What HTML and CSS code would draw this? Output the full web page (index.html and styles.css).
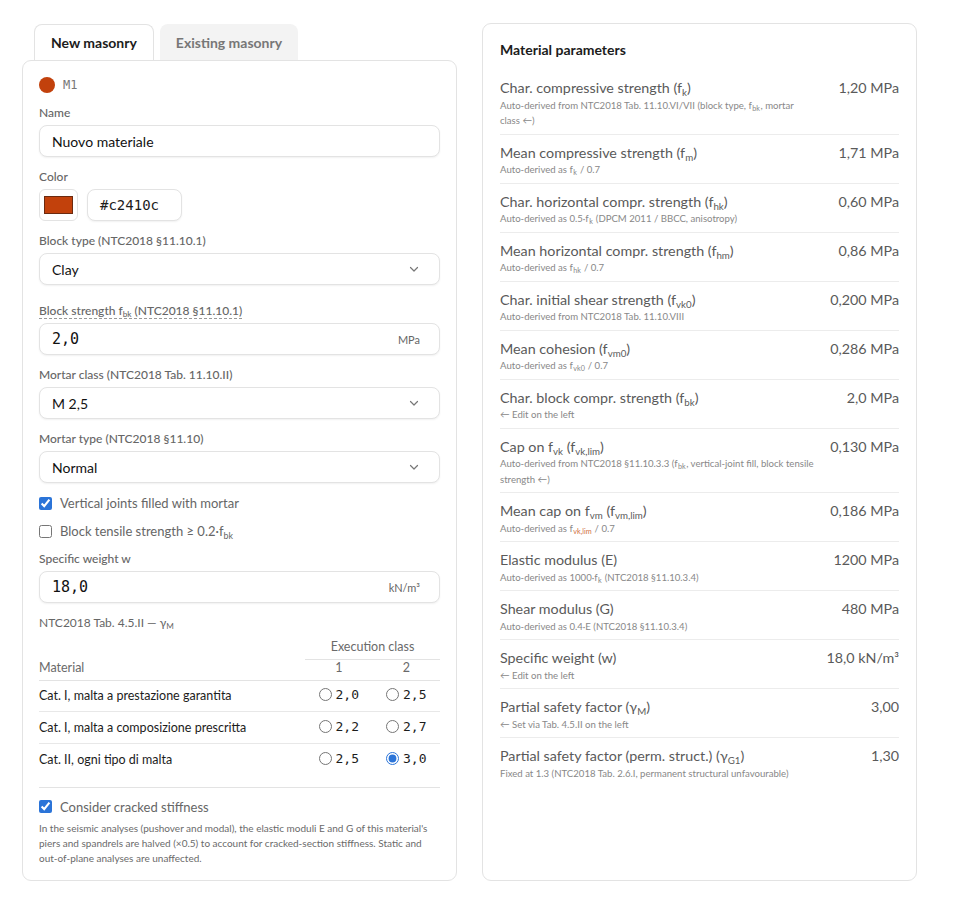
FILE: index.html
```html
<!DOCTYPE html>
<html lang="en">
<head>
    <meta charset="UTF-8">
    <meta name="viewport" content="width=device-width, initial-scale=1.0">
    <title>Masonry material</title>
    <link rel="stylesheet" href="styles.css">
</head>
<body>
    <div class="layout">
        <!-- Left: material editor -->
        <div class="editor">
            <div class="tabs">
                <div class="tab active">New masonry</div>
                <div class="tab">Existing masonry</div>
            </div>
            <div class="card form-card">
                <div class="material-id">
                    <span class="dot"></span>
                    <span class="mono id-text">M1</span>
                </div>

                <div class="field">
                    <label class="field-label">Name</label>
                    <div class="box"><span class="box-text">Nuovo materiale</span></div>
                </div>

                <div class="field">
                    <label class="field-label">Color</label>
                    <div class="color-row">
                        <div class="swatch-box"><span class="swatch"></span></div>
                        <div class="box hex-box"><span class="mono hex">#c2410c</span></div>
                    </div>
                </div>

                <div class="field">
                    <label class="field-label">Block type (NTC2018 §11.10.1)</label>
                    <div class="box select">
                        <span class="box-text">Clay</span>
                        <svg class="chevron" width="12" height="12" viewBox="0 0 12 12"><path d="M2.5 4.5 L6 8 L9.5 4.5" fill="none" stroke="#777" stroke-width="1.2" stroke-linecap="round" stroke-linejoin="round"/></svg>
                    </div>
                </div>

                <div class="field field-spaced">
                    <label class="field-label"><span class="dashed">Block strength f<sub>bk</sub> (NTC2018 §11.10.1)</span></label>
                    <div class="box">
                        <span class="mono num">2,0</span>
                        <span class="unit">MPa</span>
                    </div>
                </div>

                <div class="field">
                    <label class="field-label">Mortar class (NTC2018 Tab. 11.10.II)</label>
                    <div class="box select">
                        <span class="box-text">M 2,5</span>
                        <svg class="chevron" width="12" height="12" viewBox="0 0 12 12"><path d="M2.5 4.5 L6 8 L9.5 4.5" fill="none" stroke="#777" stroke-width="1.2" stroke-linecap="round" stroke-linejoin="round"/></svg>
                    </div>
                </div>

                <div class="field">
                    <label class="field-label">Mortar type (NTC2018 §11.10)</label>
                    <div class="box select">
                        <span class="box-text">Normal</span>
                        <svg class="chevron" width="12" height="12" viewBox="0 0 12 12"><path d="M2.5 4.5 L6 8 L9.5 4.5" fill="none" stroke="#777" stroke-width="1.2" stroke-linecap="round" stroke-linejoin="round"/></svg>
                    </div>
                </div>

                <label class="check"><input type="checkbox" checked><span>Vertical joints filled with mortar</span></label>
                <label class="check"><input type="checkbox"><span>Block tensile strength ≥ 0.2·f<sub>bk</sub></span></label>

                <div class="field">
                    <label class="field-label">Specific weight w</label>
                    <div class="box">
                        <span class="mono num">18,0</span>
                        <span class="unit">kN/m³</span>
                    </div>
                </div>

                <div class="table-title">NTC2018 Tab. 4.5.II — γ<sub>M</sub></div>
                <table class="gamma-table">
                    <thead>
                        <tr>
                            <th></th>
                            <th colspan="2" class="exec">Execution class</th>
                        </tr>
                        <tr class="sub-head">
                            <th class="mat">Material</th>
                            <th>1</th>
                            <th>2</th>
                        </tr>
                    </thead>
                    <tbody>
                        <tr>
                            <td>Cat. I, malta a prestazione garantita</td>
                            <td><label class="radio"><input type="radio" name="g"><span class="mono">2,0</span></label></td>
                            <td><label class="radio"><input type="radio" name="g"><span class="mono">2,5</span></label></td>
                        </tr>
                        <tr>
                            <td>Cat. I, malta a composizione prescritta</td>
                            <td><label class="radio"><input type="radio" name="g"><span class="mono">2,2</span></label></td>
                            <td><label class="radio"><input type="radio" name="g"><span class="mono">2,7</span></label></td>
                        </tr>
                        <tr>
                            <td>Cat. II, ogni tipo di malta</td>
                            <td><label class="radio"><input type="radio" name="g"><span class="mono">2,5</span></label></td>
                            <td><label class="radio"><input type="radio" name="g" checked><span class="mono">3,0</span></label></td>
                        </tr>
                    </tbody>
                </table>

                <div class="cracked">
                    <label class="check"><input type="checkbox" checked><span>Consider cracked stiffness</span></label>
                    <p class="note">In the seismic analyses (pushover and modal), the elastic moduli E and G of this material's piers and spandrels are halved (×0.5) to account for cracked-section stiffness. Static and out-of-plane analyses are unaffected.</p>
                </div>
            </div>
        </div>

        <!-- Right: derived parameters -->
        <div class="card params-card">
            <h3>Material parameters</h3>
            <div class="param">
                <div class="param-main">
                    <div class="param-name">Char. compressive strength (f<sub>k</sub>)</div>
                    <div class="param-note">Auto-derived from NTC2018 Tab. 11.10.VI/VII (block type, f<sub>bk</sub>, mortar class&nbsp;←)</div>
                </div>
                <div class="param-value">1,20 MPa</div>
            </div>
            <div class="param">
                <div class="param-main">
                    <div class="param-name">Mean compressive strength (f<sub>m</sub>)</div>
                    <div class="param-note">Auto-derived as f<sub>k</sub> / 0.7</div>
                </div>
                <div class="param-value">1,71 MPa</div>
            </div>
            <div class="param">
                <div class="param-main">
                    <div class="param-name">Char. horizontal compr. strength (f<sub>hk</sub>)</div>
                    <div class="param-note">Auto-derived as 0.5·f<sub>k</sub> (DPCM 2011 / BBCC, anisotropy)</div>
                </div>
                <div class="param-value">0,60 MPa</div>
            </div>
            <div class="param">
                <div class="param-main">
                    <div class="param-name">Mean horizontal compr. strength (f<sub>hm</sub>)</div>
                    <div class="param-note">Auto-derived as f<sub>hk</sub> / 0.7</div>
                </div>
                <div class="param-value">0,86 MPa</div>
            </div>
            <div class="param">
                <div class="param-main">
                    <div class="param-name">Char. initial shear strength (f<sub>vk0</sub>)</div>
                    <div class="param-note">Auto-derived from NTC2018 Tab. 11.10.VIII</div>
                </div>
                <div class="param-value">0,200 MPa</div>
            </div>
            <div class="param">
                <div class="param-main">
                    <div class="param-name">Mean cohesion (f<sub>vm0</sub>)</div>
                    <div class="param-note">Auto-derived as f<sub>vk0</sub> / 0.7</div>
                </div>
                <div class="param-value">0,286 MPa</div>
            </div>
            <div class="param">
                <div class="param-main">
                    <div class="param-name">Char. block compr. strength (f<sub>bk</sub>)</div>
                    <div class="param-note">← Edit on the left</div>
                </div>
                <div class="param-value">2,0 MPa</div>
            </div>
            <div class="param">
                <div class="param-main">
                    <div class="param-name">Cap on f<sub>vk</sub> (f<sub>vk,lim</sub>)</div>
                    <div class="param-note">Auto-derived from NTC2018 §11.10.3.3 (f<sub>bk</sub>, vertical-joint fill, block tensile strength&nbsp;←)</div>
                </div>
                <div class="param-value">0,130 MPa</div>
            </div>
            <div class="param">
                <div class="param-main">
                    <div class="param-name">Mean cap on f<sub>vm</sub> (f<sub>vm,lim</sub>)</div>
                    <div class="param-note">Auto-derived as f<sub class="accent">vk,lim</sub> / 0.7</div>
                </div>
                <div class="param-value">0,186 MPa</div>
            </div>
            <div class="param">
                <div class="param-main">
                    <div class="param-name">Elastic modulus (E)</div>
                    <div class="param-note">Auto-derived as 1000·f<sub>k</sub> (NTC2018 §11.10.3.4)</div>
                </div>
                <div class="param-value">1200 MPa</div>
            </div>
            <div class="param">
                <div class="param-main">
                    <div class="param-name">Shear modulus (G)</div>
                    <div class="param-note">Auto-derived as 0.4·E (NTC2018 §11.10.3.4)</div>
                </div>
                <div class="param-value">480 MPa</div>
            </div>
            <div class="param">
                <div class="param-main">
                    <div class="param-name">Specific weight (w)</div>
                    <div class="param-note">← Edit on the left</div>
                </div>
                <div class="param-value">18,0 kN/m³</div>
            </div>
            <div class="param">
                <div class="param-main">
                    <div class="param-name">Partial safety factor (γ<sub>M</sub>)</div>
                    <div class="param-note">← Set via Tab. 4.5.II on the left</div>
                </div>
                <div class="param-value">3,00</div>
            </div>
            <div class="param">
                <div class="param-main">
                    <div class="param-name">Partial safety factor (perm. struct.) (γ<sub>G1</sub>)</div>
                    <div class="param-note">Fixed at 1.3 (NTC2018 Tab. 2.6.I, permanent structural unfavourable)</div>
                </div>
                <div class="param-value">1,30</div>
            </div>
        </div>
    </div>
</body>
</html>
```

FILE: styles.css
```css
* {
    margin: 0;
    padding: 0;
    box-sizing: border-box;
}

body {
    font-family: Lato, "Noto Sans", sans-serif;
    color: #1c1c1c;
    background: #fff;
    padding: 23px 22px;
}

.mono {
    font-family: "DejaVu Sans Mono", monospace;
}

sub {
    font-size: 0.68em;
    vertical-align: -0.3em;
    line-height: 0;
}

.layout {
    display: grid;
    grid-template-columns: 435px 435px;
    gap: 25px;
    height: 858px;
}

.editor {
    display: flex;
    flex-direction: column;
}

/* Tabs */
.tabs {
    display: flex;
    gap: 6px;
    padding-left: 12px;
    margin-top: 1px;
}

.tab {
    height: 36px;
    padding: 0 16px;
    display: flex;
    align-items: center;
    font-size: 14px;
    font-weight: 700;
    color: #777;
    background: #f3f3f3;
    border-radius: 8px 8px 0 0;
}

.tab.active {
    background: #fff;
    color: #1c1c1c;
    border: 1px solid #e3e3e3;
    border-bottom: none;
    margin-bottom: -1px;
    position: relative;
    z-index: 1;
}

.card {
    background: #fff;
    border: 1px solid #e3e3e3;
    border-radius: 9px;
}

.form-card {
    flex: 1;
    padding: 16px 16px 0;
}

.material-id {
    display: flex;
    align-items: center;
    gap: 8px;
    height: 16px;
    margin-bottom: 12px;
}

.dot {
    width: 16px;
    height: 16px;
    border-radius: 50%;
    background: #c2410c;
}

.id-text {
    font-size: 12px;
    color: #777;
}

.field {
    margin-bottom: 12px;
}

.field-spaced {
    margin-top: 18px;
}

.field-label {
    display: block;
    font-size: 12px;
    font-weight: 500;
    color: #666;
    line-height: 16px;
    margin-bottom: 4px;
}

.dashed {
    border-bottom: 1px dashed #999;
}

.box {
    height: 32px;
    border: 1px solid #e3e3e3;
    border-radius: 8px;
    box-shadow: 0 1px 2px rgba(0, 0, 0, 0.06);
    display: flex;
    align-items: center;
    justify-content: space-between;
    padding: 0 19px 0 12px;
    background: #fff;
}

.box-text {
    font-size: 14px;
    color: #111;
}

.num {
    font-size: 15px;
    color: #111;
}

.unit {
    font-size: 11px;
    color: #666;
}

.chevron {
    display: block;
}

.color-row {
    display: flex;
    gap: 9px;
}

.swatch-box {
    width: 39px;
    height: 32px;
    border: 1px solid #e3e3e3;
    border-radius: 6px;
    display: flex;
    align-items: center;
    justify-content: center;
}

.swatch {
    width: 29px;
    height: 18px;
    background: #c2410c;
    border: 1px solid #6b2a10;
}

.hex-box {
    width: 95px;
}

.hex {
    font-size: 14px;
}

/* Checkboxes */
.check {
    display: flex;
    align-items: center;
    gap: 8px;
    font-size: 13px;
    color: #666;
    height: 16px;
    margin-bottom: 12px;
}

.check input {
    margin: 0;
    width: 13px;
    height: 13px;
    accent-color: #2b74d8;
}

.table-title {
    font-size: 12px;
    line-height: 16px;
    color: #666;
    margin-bottom: 4px;
}

/* Gamma table */
.gamma-table {
    width: 100%;
    border-collapse: collapse;
}

.gamma-table th {
    font-size: 12.5px;
    font-weight: 400;
    color: #6a6a6a;
    text-align: center;
    padding: 0;
}

.gamma-table th.exec {
    height: 24px;
    border-bottom: 1px solid #e3e3e3;
    vertical-align: middle;
}

.gamma-table .sub-head th {
    height: 21px;
    border-bottom: 1px solid #e3e3e3;
    vertical-align: bottom;
    padding-bottom: 5px;
}

.gamma-table th.mat {
    text-align: left;
    width: 266px;
}

.gamma-table td {
    font-size: 12.5px;
    color: #1c1c1c;
    height: 31.5px;
    padding: 0;
    border-bottom: 1px solid #e8e8e8;
}

.gamma-table tr:last-child td {
    border-bottom: none;
}

.gamma-table td + td {
    text-align: center;
}

.radio {
    display: inline-flex;
    align-items: center;
    gap: 4px;
    font-size: 13px;
}

.radio input {
    margin: 0;
    width: 13px;
    height: 13px;
    accent-color: #2b74d8;
}

.cracked {
    margin-top: 12px;
    border-top: 1px solid #e3e3e3;
    padding-top: 11px;
}

.cracked .check {
    margin-bottom: 6px;
}

.note {
    font-size: 10px;
    line-height: 15px;
    color: #6a6a6a;
}

/* Parameters */
.params-card {
    padding: 16px 17px;
}

.params-card h3 {
    font-size: 14px;
    font-weight: 700;
    line-height: 20px;
    margin-bottom: 10px;
}

.param {
    display: flex;
    justify-content: space-between;
    gap: 12px;
    padding: 8px 0 5px;
    border-bottom: 1px solid #ececec;
}

.param:last-child {
    border-bottom: none;
}

.param-main {
    max-width: 322px;
}

.param-name {
    font-size: 14.3px;
    line-height: 19.5px;
    color: #5a5a5a;
}

.param-note {
    font-size: 9.6px;
    line-height: 15.5px;
    color: #888;
}

.param-note sub {
    font-size: 0.75em;
    margin: 0 0.5px;
}

.param-note .accent {
    color: #d0703f;
}

.param-value {
    font-size: 14.3px;
    line-height: 19.5px;
    color: #5a5a5a;
    white-space: nowrap;
}
```
